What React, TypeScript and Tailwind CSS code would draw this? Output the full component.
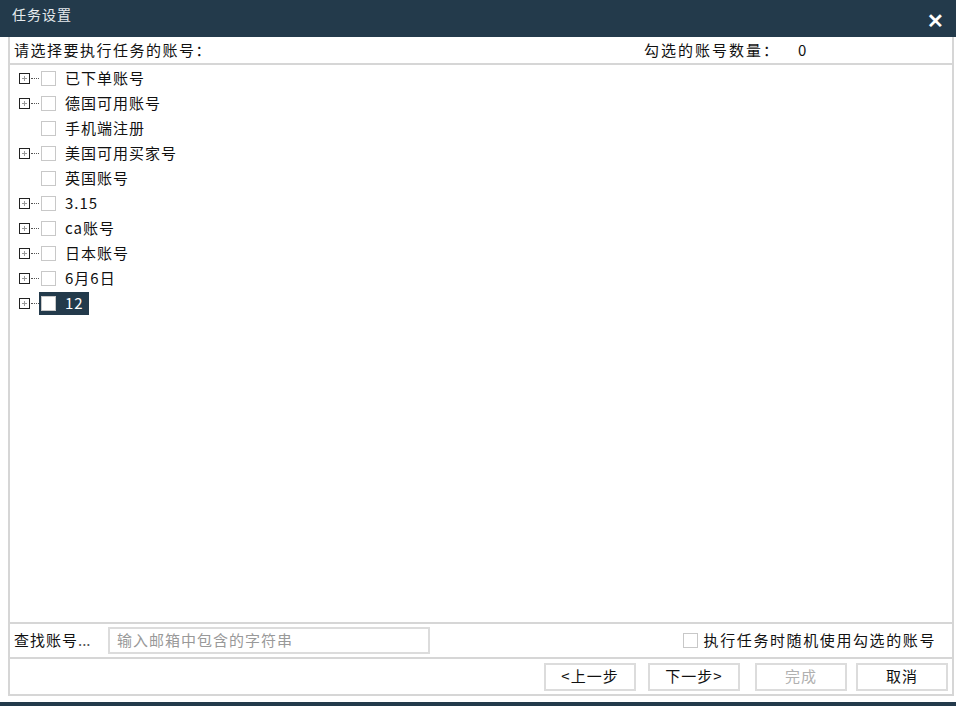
import {useState} from "react";

interface Account {
    label: string;
    expandable: boolean;
}

const accounts: Account[] = [
    {label: '已下单账号', expandable: true},
    {label: '德国可用账号', expandable: true},
    {label: '手机端注册', expandable: false},
    {label: '美国可用买家号', expandable: true},
    {label: '英国账号', expandable: false},
    {label: '3.15', expandable: true},
    {label: 'ca账号', expandable: true},
    {label: '日本账号', expandable: true},
    {label: '6月6日', expandable: true},
    {label: '12', expandable: true},
];

const font = "font-['Microsoft_YaHei','Noto_Sans_CJK_SC',sans-serif]";

// small plus box used by the tree
const Expander = () => (
    <div className="flex items-center w-[22px]">
        <div className="w-[11px] h-[11px] border-[1.5px] border-[#222] bg-white flex items-center justify-center relative">
            <div className="absolute w-[5px] h-px bg-[#999]" />
            <div className="absolute h-[5px] w-px bg-[#999]" />
        </div>
        <div className="w-[8px] border-t border-dotted border-[#555] ml-[1px]" />
    </div>
);

const Box = ({className = ''}: {className?: string}) => (
    <div className={`w-[15px] h-[15px] border border-[#c8c8c8] bg-white shrink-0 ${className}`} />
);

const Button = ({label, disabled = false, className = ''}: {label: string; disabled?: boolean; className?: string}) => (
    <button
        className={`w-[92px] h-[28px] border-2 border-[#dcdcdc] bg-white text-[15px] tracking-[1px] ${disabled ? 'text-[#b0b0b0]' : 'text-[#111]'} ${className}`}
    >
        {label}
    </button>
);

export default function App() {
    const [selected] = useState(9);

    return (
        <div className={`w-[956px] h-[706px] flex flex-col bg-white ${font}`}>
            {/* Title bar */}
            <header className="h-[37px] bg-[#233a4b] flex items-center justify-between pl-[12px] pr-[12px] shrink-0">
                <span className="text-[14px] tracking-[1px] text-[#e6eaee] -mt-[8px]">任务设置</span>
                <span className="text-white text-[20px] font-bold leading-none mt-[2px]">✕</span>
            </header>

            <div className="flex-1 flex flex-col pl-[8px] pr-[2px]">
                <div className="flex-1 flex flex-col border-x-2 border-b-2 border-[#d6d6d6] text-[15px] tracking-[1px]">
                    {/* Header row */}
                    <div className="h-[28px] flex items-center justify-between border-b-2 border-[#d6d6d6] pl-[4px] text-[#111] shrink-0">
                        <span className="tracking-[1.5px]">请选择要执行任务的账号：</span>
                        <div className="flex items-center pr-[144px]">
                            <span className="tracking-[2px]">勾选的账号数量：</span>
                            <span className="ml-[18px] w-[10px]">0</span>
                        </div>
                    </div>

                    {/* Tree */}
                    <div className="flex-1 pt-[1px] pl-[9px]">
                        {accounts.map((a, i) => (
                            <div key={i} className="h-[25px] flex items-center text-[#111]">
                                {a.expandable ? <Expander /> : <div className="w-[22px]" />}
                                <div className={`flex items-center h-[23px] -ml-[2px] pl-[2px] pr-[5px] ${i === selected ? 'bg-[#233a4b] text-white' : ''}`}>
                                    <Box />
                                    <span className="ml-[9px]">{a.label}</span>
                                </div>
                            </div>
                        ))}
                    </div>

                    {/* Search row */}
                    <div className="h-[37px] flex items-center border-y-2 border-[#d6d6d6] pl-[4px] pr-[16px] shrink-0">
                        <span className="text-[#111] w-[90px]">查找账号<span className="text-[#555] tracking-normal">...</span></span>
                        <div className="ml-[4px] w-[322px] h-[27px] border-2 border-[#dcdcdc] flex items-center pl-[7px] text-[#999]">
                            输入邮箱中包含的字符串
                        </div>
                        <div className="ml-auto flex items-center text-[#111]">
                            <Box className="border-[#b8b8b8]" />
                            <span className="ml-[6px] tracking-[1.6px]">执行任务时随机使用勾选的账号</span>
                        </div>
                    </div>

                    {/* Buttons */}
                    <div className="h-[35px] flex items-center justify-end pr-[4px] shrink-0">
                        <Button label="<上一步" />
                        <Button label="下一步>" className="ml-[12px]" />
                        <Button label="完成" disabled className="ml-[15px]" />
                        <Button label="取消" className="ml-[9px]" />
                    </div>
                </div>
                <div className="h-[6px] shrink-0" />
            </div>
            <div className="h-[4px] bg-[#233a4b] shrink-0" />
        </div>
    );
}
